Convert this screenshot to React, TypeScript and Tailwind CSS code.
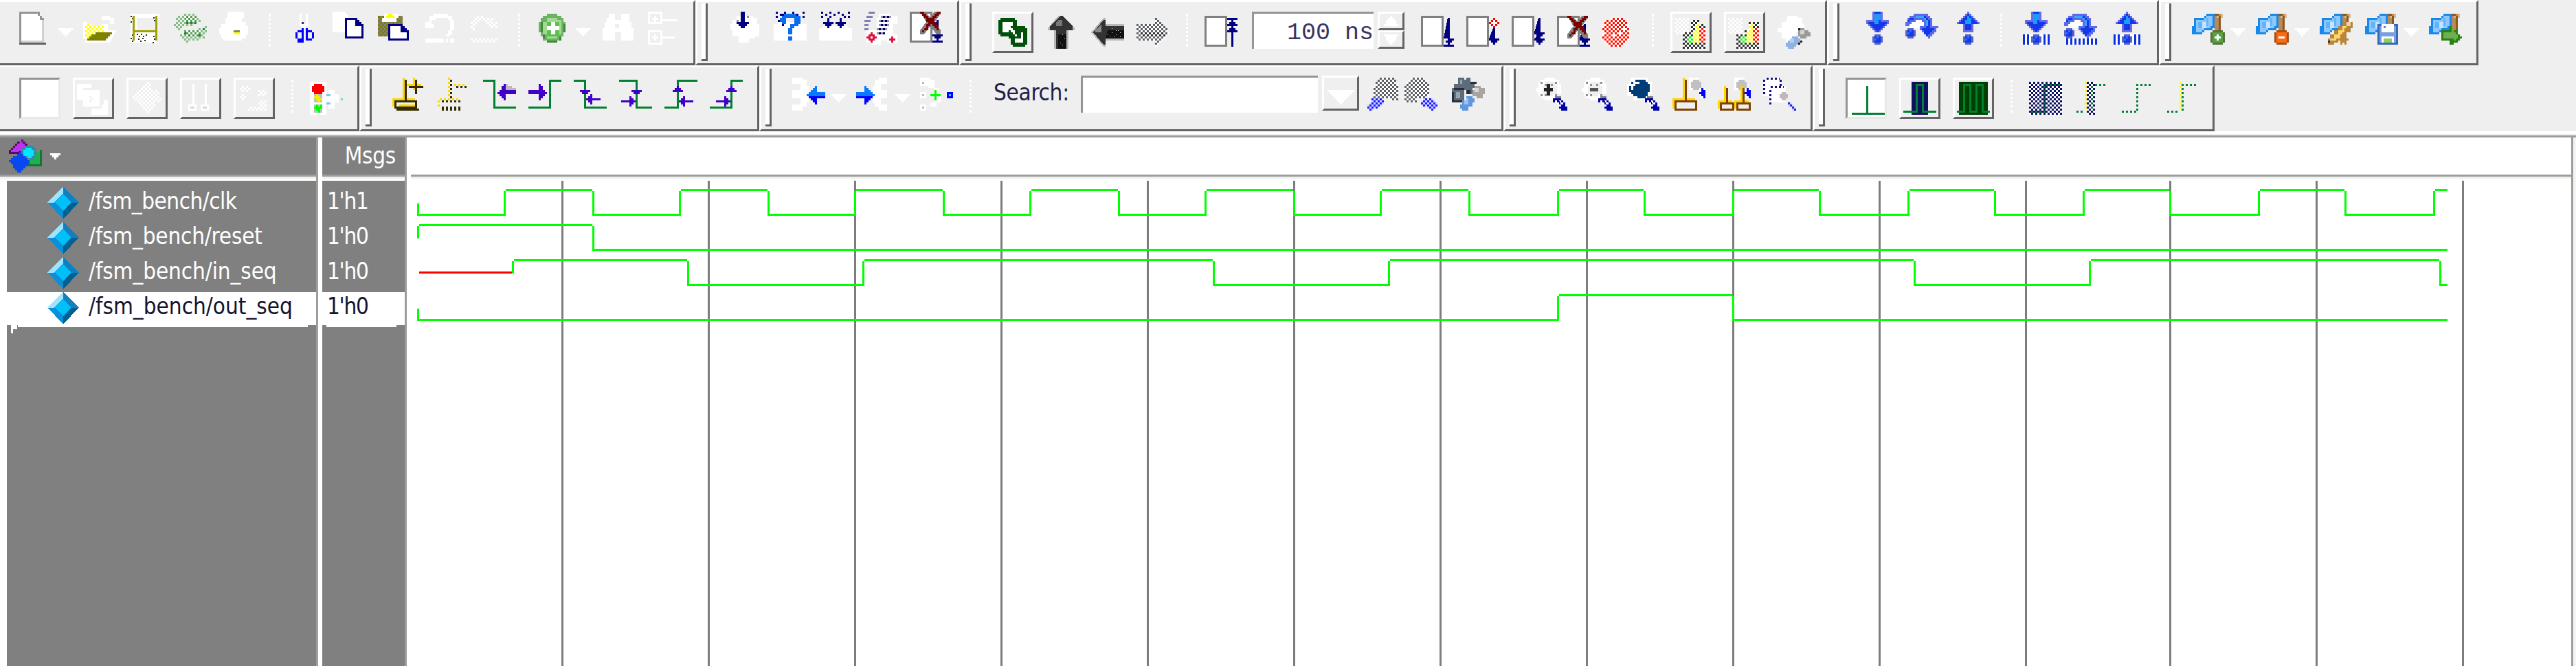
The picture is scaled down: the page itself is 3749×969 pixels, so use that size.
import React from "react";

type Kids = { children?: React.ReactNode };

const PATTERNS: [string, string, string][] = [
  ["yellow", "#ffff00", "#ffffff"],
  ["green", "#4d9a4d", "#ffffff"],
  ["lgreen", "#86bd86", "#e8efe8"],
  ["olive", "#808000", "#808080"],
  ["gray", "#5d6166", "#ffffff"],
  ["black", "#303030", "#ffffff"],
  ["blue", "#1c1cff", "#d8d8ff"],
  ["navy", "#101060", "#ffffff"],
  ["rede", "#ff1000", "#ffffff"],
  ["lime", "#00ff00", "#ffffff"],
  ["white", "#ffffff", "#efefef"],
];

function Patterns() {
  return (
    <svg className="absolute h-0 w-0" aria-hidden="true">
      <defs>
        {PATTERNS.map(([id, a, b]) => (
          <pattern key={id} id={id} width="2" height="2" patternUnits="userSpaceOnUse">
            <rect width="2" height="2" fill={b} />
            <rect width="1" height="1" fill={a} />
            <rect x="1" y="1" width="1" height="1" fill={a} />
          </pattern>
        ))}
      </defs>
    </svg>
  );
}

/* filled shape on the 16x16 grid */
function S({ f, d }: { f: string; d: string }) {
  return <path fill={f} d={d} />;
}
/* open line drawn one grid cell wide */
function L({ c, d, w = 1, dash }: { c: string; d: string; w?: number; dash?: string }) {
  return <path fill="none" stroke={c} strokeWidth={w} strokeDasharray={dash} d={d} />;
}

function Icon({ children, className = "" }: Kids & { className?: string }) {
  return (
    <svg viewBox="0 0 16 16" shapeRendering="crispEdges" className={`h-12 w-12 shrink-0 overflow-visible ${className}`}>
      {children}
    </svg>
  );
}

function Caret({ className = "" }: { className?: string }) {
  return (
    <svg viewBox="0 0 7 4" shapeRendering="crispEdges" className={`-mr-[3px] -ml-[9px] h-3 w-[21px] shrink-0 ${className}`}>
      <path fill="#fff" d="M0 0h7v1h-1v1h-1v1h-1v1h-1v-1h-1v-1h-1v-1h-1z" />
    </svg>
  );
}

function Sep() {
  return <div className="mx-[6px] mt-[3px] h-12 w-[3px] shrink-0 border-l-[3px] border-dotted border-white" />;
}

function Btn({ children, pressed = false }: Kids & { pressed?: boolean }) {
  return (
    <div
      className={
        pressed
          ? "h-[60px] w-[60px] shrink-0 border-[3px] border-t-[#959595] border-r-[#e8e8e8] border-b-[#e8e8e8] border-l-[#959595] bg-white p-[3px]"
          : "h-[60px] w-[60px] shrink-0 border-[3px] border-t-white border-r-[#656365] border-b-[#656365] border-l-white p-[3px]"
      }
    >
      {children}
    </div>
  );
}

function Bar({ children, className = "", grip = true }: Kids & { className?: string; grip?: boolean }) {
  return (
    <div
      className={`flex h-full shrink-0 border-t-[3px] border-r-[3px] border-b-[3px] border-t-white border-r-[#656365] border-b-[#656365] ${
        grip ? "border-l-[3px] border-l-white" : ""
      } ${className}`}
    >
      {grip && (
        <div className="mt-[2px] mr-[30px] ml-[6px] h-[84px] w-[9px] shrink-0 border-r-[3px] border-b-[3px] border-r-[#656365] border-b-[#656365] bg-white" />
      )}
      {children}
    </div>
  );
}

/* ---------- standard toolbar ---------- */
const NewDoc = () => (
  <Icon>
    <S f="#fff" d="M1 1h9l2 3v11H1z" />
    <S f="#959595" d="M0 0h10v1H1v14H0zM9 1h1v1h1v1h1v1h-2V2H9z" />
    <S f="#d0d0d0" d="M11 4h1v11H1v-1h10z" />
    <S f="#656365" d="M0 15h13v1H0z" />
  </Icon>
);
const OpenFolder = () => (
  <Icon>
    <S f="#fff" d="M0 5h2v8H0zM9 2h4v1h2v3h-2V4H9zM9 6h3v3h4l-3 6H1v-1h10l3-4H10z" />
    <S f="url(#yellow)" d="M1 6h3v1h6v3H6v1H5v1H4v1H1z" />
    <S f="#808000" d="M6 10h8v1h-1v1h-1v1h-1v1H2v-1h1v-1h1v-1h2z" />
  </Icon>
);
const Save = () => (
  <Icon>
    <S f="#fff" d="M1 1h14v2h-1v12H1z" />
    <S f="#efefef" d="M4 3h9v6H4z" />
    <g fill="#2a2a10">
      {[[1, 2], [1.5, 3], [1, 4.5], [1.5, 11], [1, 12.5], [1.5, 14], [12, 2.5], [12.3, 4], [4, 10.5], [5, 11.5], [6, 10.5], [7, 11.5], [4.5, 13], [5.5, 14], [6.5, 12.8], [7.5, 13.8], [8.2, 11], [12, 11.5], [12.3, 13], [11.6, 14.5]].map(
        ([x, y]) => (
          <rect key={`${x}-${y}`} x={x} y={y} width="0.67" height="0.67" />
        ),
      )}
    </g>
    <S f="#a0a000" d="M2 2h1v7h10V2h1v12h-1v-4H3v4H2z" />
  </Icon>
);
const Refresh = () => (
  <Icon>
    <S f="url(#lgreen)" d="M2 2h2V1h5V0h1v1h1v1h1v1h1v2h-2v1h-1v1H5v1H3v1H1V8H0V5h1V3h1zM15 7h1v4h-1v2h-2v1H7v2H6v-1H5v-1H4v-1H3v-2h2v-1h2V9h4V8h4z" />
    <S f="url(#green)" d="M5 2h6v3H6zM5 9h8v3H6z" />
    <S f="#2f7d3a" d="M6 5h1v1H6zM8 5h1v1H8zM10 5h1v1h-1zM5 10h1v1H5zM7 11h1v1H7zM12 11h1v1h-1zM14 8h1v1h-1z" />
  </Icon>
);
const Print = () => (
  <Icon>
    <S f="#fff" d="M4 0h8v3h-1v2h2v2h1v4h-1v2h-2v1H2v-1H1v-2H0V8h1V6h2V3h1z" />
    <S f="#8c8468" d="M7 9h3v1H7z" />
    <S f="#ffff00" d="M7 10h3v1H7z" />
  </Icon>
);
const Cut = () => (
  <Icon>
    <S f="#fff" d="M6 1h1v6H6zM9 1h1v6H9zM7 6h2v2H7z" />
    <S f="#333" d="M7 5h1v1H7z" />
    <S f="#0000ff" d="M7 8h1v7H7v-1H5v-1H4v-3h1V9h2zM9 8h1v1h2v1h1v3h-1v1H9zM5 14h2v1H5z" />
    <S f="#efefef" d="M5 10h2v3H5zM10 10h2v3h-2z" />
  </Icon>
);
const NavyDoc = ({ x, y, w, h }: { x: number; y: number; w: number; h: number }) => (
  <g transform={`translate(${x} ${y})`}>
    <path fill="#000080" d={`M0 0h${w - 3}v1h1v1h1v1h1v${h - 3}H0z`} />
    <path fill="#fff" d={`M1 1h${w - 5}v3h3v${h - 5}H1z`} />
  </g>
);
const Copy = () => (
  <Icon>
    <S f="#fff" d="M0 0h6l2 3v7H0z" />
    <NavyDoc x={6} y={3} w={9} h={10} />
  </Icon>
);
const Paste = () => (
  <Icon>
    <S f="url(#olive)" d="M0 2h12v10H0z" />
    <S f="#fff" d="M3 1h7v2h-1v2H2V3h1z" />
    <S f="#ffff00" d="M5 1h2v1h1v1H4V2h1z" />
    <NavyDoc x={5} y={6} w={10} h={8} />
  </Icon>
);
const Undo = () => (
  <Icon>
    <S f="#fff" d="M3 2h2V1h7v1h2v2h1v5h-1v2h-1v1h-2v-1h1V9h1V4h-1V3H6v1H4v2h1v2H1V5h2zM1 13h9v2H1zM11 13h1v2h-1zM13 13h2v2h-2z" />
  </Icon>
);
const Redo = () => (
  <Icon>
    <S f="url(#white)" d="M3 2h5v2H5v2H3v3H1V5h1zM8 3h4v2h2v3h-4V6H8zM1 13h13v2H1z" />
  </Icon>
);
const Plus = () => (
  <Icon>
    <S f="#6fb068" d="M5 1h5v1h2v1h1v2h1v5h-1v2h-1v2h-2v1H5v-1H3v-2H2v-2H1V5h1V3h1V2h2z" />
    <S f="#3f8a3a" d="M2 5h1v5H2zM13 6h1v4h-1zM5 14h5v1H5zM3 11h1v2H3zM11 12h1v2h-1z" />
    <S f="#9fdc90" d="M5 3h5v1h2v7h-2v2H5v-2H3V5h2z" />
    <S f="#5fbf50" d="M5 5h6v7H5z" />
    <S f="#fff" d="M7 5h2v2h2v2H9v2H7V9H5V7h2z" />
  </Icon>
);
const Binoc = () => (
  <Icon>
    <S f="#fff" d="M4 1h3v3h3V1h4v4h1v3h1v6h-6v-4H7v4H1V8h1V5h1V3h1z" />
    <S f="#efefef" d="M7 6h2v2H7z" />
  </Icon>
);
const Tree = () => (
  <Icon>
    <L c="#fff" d="M1.5 .5h6v5h-6zM1.5 9.5h6v6h-6zM8 4h7M8 12.5h6" />
    <S f="#fff" d="M4 2h1v3H4zM3 3h3v1H3zM4 11h1v3H4zM3 12h3v1H3z" />
  </Icon>
);

/* ---------- simulate toolbars ---------- */
const DownBlob = () => (
  <Icon>
    <S f="#fff" d="M4 2h8v1h2v3h1v6h-2v1h-3v2H5v-3H2V9H1V6h1V4h2z" />
    <S f="#909090" d="M4 4h1v1H4zM9 2h1v1H9z" />
    <S f="#000080" d="M6 0h2v5h2v1H9v1H8v1H6V7H5V6H4V5h2z" />
  </Icon>
);
const Dots = () => (
  <S
    f="#000080"
    d="M1 0h1v1H1zM5 0h1v1H5zM9 0h1v1H9zM14 0h1v1h-1zM3 1h1v1H3zM7 1h1v1H7zM11 1h1v1h-1zM1 2h1v1H1zM14 2h1v1h-1zM12 2h1v1h-1zM5 2h1v1H5z"
  />
);
const Question = () => (
  <Icon>
    <S f="#fff" d="M0 6h2V5h12v1h2v8H0z" />
    <Dots />
    <S f="#000080" d="M2 4h2v1H2zM12 4h1v1h-1zM4 6h1v1H4zM11 5h1v1h-1zM3 1h2v1H3z" />
    <S f="#0a6cf0" d="M5 1h6v1h2v4h-1v1h-2v1H9v3H7V8h1V6h2V3H6v3H4V5H3V3h1V2h1zM7 12h2v2H7z" />
  </Icon>
);
const DownPair = () => (
  <Icon>
    <S f="#fff" d="M0 8h16v6H0zM2 7h12v1H2z" />
    <Dots />
    <S f="#000080" d="M4 3h1v2h2v1H6v1H5v1H4V7H3V6H2V5h2zM10 3h1v2h2v1h-1v1h-1v1h-1V7H9V6H8V5h2z" />
  </Icon>
);
const ListStep = () => (
  <Icon>
    <S f="#fff" d="M7 1h6v1h3v4h-2v5h2v4h-5v-1H8v2H4v-1H1V9h5V3h1z" />
    <S f="#8080b0" d="M2 0h3v1H2zM1 2h3v1H1zM0 4h3v1H0zM0 6h2v1H0zM0 8h2v1H0z" />
    <S f="#9090b8" d="M8 2h5v1H8zM7 4h5v1H7zM7 6h5v1H7zM6 8h5v1H6zM6 10h4v1H6z" />
    <S f="#000060" d="M9 2h1v1H9zM11 2h1v1h-1zM8 4h1v1H8zM10 4h1v1h-1zM8 6h1v1H8zM10 6h1v1h-1zM7 8h1v1H7zM9 8h1v1H9zM7 10h1v1H7zM9 10h1v1H9z" />
    <S f="#dc143c" d="M3 10h1v1h1v1h1v1H5v1H4v1H3v-1H2v-1H1v-1h1v-1h1zM13 12h1v1h1v1h-1v1h-1v-1h-1v-1h1z" />
    <S f="#fff" d="M3 12h1v1H3z" />
  </Icon>
);
const Cross = ({ x }: { x: number }) => (
  <g transform={`translate(${x} 0)`}>
    <S f="#808080" d="M0 0h2l3 3 2-3h3v1L7 5l3 4v2H8L5 7l-3 4H0V9l3-4z" />
    <S f="#7d0000" d="M0 0h2v1h1v1h1v1h2V2h1V1h1V0h2v1H9v1H8v1H7v2h1v2h1v2H8V8H7V7H6V6H5v1H4v2H2v1H1V9h1V8h1V6h1V5H3V3H2V2H1V1H0z" />
  </g>
);
const XDoc = () => (
  <Icon>
    <S f="#808080" d="M0 0h11v15H0z" />
    <S f="#fff" d="M1 1h9v13H1z" />
    <S f="#000080" d="M13 4h1v7h2v1h-1v1h-1v1h2v1h-5v-1h2v-1h-1v-1h-1v-1h2z" />
    <Cross x={5} />
  </Icon>
);
const Rings = () => (
  <Icon>
    <S f="#00500c" d="M2 1h7v1h1v3h4v1h1v8h-1v1H8v-1H7v-3H6v-1H2V9H1V2h1z" />
    <S f="#fff" d="M3 3h5v2H5v3H3zM12 8h1v5H9v-2h3zM5 5h2v1h1v1h1v2h1v1H9V9H8V8H7V7H6v1H5z" />
  </Icon>
);
const BlackUp = () => (
  <Icon>
    <S f="#b8b8b8" d="M6 0h2l6 6v1h-3v9H4V7H1V6z" />
    <S f="#333" d="M7 0h1l5 5v2h-3v9H5V7H2V5z" />
    <S f="#777" d="M6 2h2v3H5V3z" />
    <S f="#111" d="M6 9h4v7H6z" />
    <S f="#ccc" d="M8 9h.4v.4H8zM9 11h.4v.4H9zM7 13h.4v.4H7zM8 14h.4v.4H8z" />
  </Icon>
);
const BlackLeft = () => (
  <Icon>
    <S f="#b8b8b8" d="M0 8l6-7h1v3h9v8H7v3H6z" />
    <S f="#333" d="M1 8l5-6h1v3h9v6H7v3H6z" />
    <S f="#888" d="M2 7l3-3v4H2z" />
    <S f="#111" d="M8 7h8v4H7z" />
    <S f="#ddd" d="M8 9h.4v.4H8zM10 8h.4v.4h-.4zM12 9h.4v.4h-.4zM11 10h.4v.4h-.4zM14 8h.4v.4h-.4zM13 7h.4v.4h-.4zM9 10h.4v.4H9zM12 7h.4v.4h-.4zM14 10h.4v.4h-.4zM10 6h.4v.4h-.4z" />
  </Icon>
);
const DotRight = () => (
  <Icon>
    <S f="url(#gray)" d="M0 4h9V1h1v1h1v1h1v1h1v1h1v1h1v2h1v1h-1v1h-1v1h-1v1h-1v1h-1v1h-1v1H9v-3H0z" />
    <S f="url(#black)" d="M2 8h12v2H2z" />
  </Icon>
);
const StepDoc = ({ children }: Kids) => (
  <Icon>
    <S f="#808080" d="M0 0h11v15H0z" />
    <S f="#fff" d="M1 1h9v13H1z" />
    {children}
  </Icon>
);
const head = "h2v1h-1v1h-1v1h-1v-1h-1v-1h-1v-1z";
const Restart = () => (
  <StepDoc>
    <S f="#000080" d="M11 1h5v1h-2v1h1v1h1v1h-2v1h1v1h1v1h-2v7h-1V8h-2V7h1V6h1V5h-2V4h1V3h1V2h-2z" />
  </StepDoc>
);
const RunDown = () => (
  <StepDoc>
    <S f="#000080" d={`M13 1h1v10${head}M13 1h-0v10h-2v1h2zM11 14h5v1h-5z`} />
  </StepDoc>
);
const RunDiamond = () => (
  <StepDoc>
    <S f="#000080" d={`M13 6h1v5${head}`} />
    <S f="#ff0000" d="M13 1h1v1h1v1h1v1h-1v1h-1v1h-1V5h-1V4h-1V3h1V2h1z" />
    <S f="#fff" d="M13 2h1v1h1v1h-1v1h-1V4h-1V3h1z" />
  </StepDoc>
);
const RunAll = () => (
  <StepDoc>
    <S f="#000080" d={`M13 1h1v7${head}M13 9h1v2${head}`} />
  </StepDoc>
);
const Break = () => (
  <StepDoc>
    <S f="#000080" d={`M13 4h1v7${head}M11 14h5v1h-5z`} />
    <Cross x={5} />
  </StepDoc>
);
const Stop = () => (
  <Icon>
    <S f="url(#rede)" d="M4 1h6v1h1v1h1v2h1v7h-1v1h-1v1h-1v1H3v-1H2v-1H1v-2H0V9h1V8H0V5h1V3h1V2h2z" />
    <S f="#fff" d="M9 6h2v1H9zM4 9h2v1H4zM8 8h2v1H8z" />
  </Icon>
);
const Profile = ({ cut = false }: { cut?: boolean }) => (
  <Icon className="mt-[3px]">
    <S f="url(#white)" d="M0 0h7v8H0z" />
    <S f="url(#black)" d={cut ? "M4 8h4V6h2V2h5v13H4z" : "M4 7h4V1h4v2h3v12H4z"} />
    <S f="url(#lime)" d="M6 9h3v3H6z" />
    <S f="url(#yellow)" d="M10 3h2v9H9V7h1z" />
    <S f="url(#rede)" d="M12 5h3v7h-3z" />
  </Icon>
);
const Wrench = () => (
  <Icon>
    <S f="#fff" d="M5 0h5v1h2v3h1v2h-2v2H9v3H6v3H4v-3H2V8H0V6h2V3h2z" />
    <S f="#9a9a96" d="M10 6h3v1h2v1h1v2h-2v1h-3v-1h-1z" />
    <S f="#d4d4d0" d="M11 7h2v2h-2z" />
    <S f="#222" d="M10 6h1v1h-1zM11 12h1v1h-1zM11 14h-1v-1h1z" />
    <S f="#8fb2e2" d="M7 10h3v1h1v2h-1v1H9v1H8v1H5v-1H4v-2h1v-1h1v-1h1z" />
    <S f="#b8d0f0" d="M6 11h2v2H6z" />
  </Icon>
);

/* ---------- step toolbar ---------- */
const ArrowDown = () => (
  <>
    <S f="#6a6ae8" d="M6 0h5v4h3v2h-1v1h-1v1h-1v1h-1v1H7V9H6V8H5V7H4V6H3V4h3z" />
    <S f="#1238e8" d="M7 0h3v5h3v1h-1v1h-1v1h-1v1H9v1H8V9H7V8H6V7H5V6H4V5h3z" />
    <S f="#1a9cff" d="M7 1h3v3H9v2H7z" />
  </>
);
const ArrowUp = () => (
  <>
    <S f="#6a6ae8" d="M8 0h1v1h1v1h1v1h1v1h1v1h1v1h-3v4H6V6H3V5h1V4h1V3h1V2h1V1h1z" />
    <S f="#1238e8" d="M8 1h1v1h1v1h1v1h1v1h1v1h-3v3H7V6H4V5h1V4h1V3h1V2h1z" />
    <S f="#1a9cff" d="M8 2h1v1h1v3H7V4h1z" />
  </>
);
const Ball = ({ x, y }: { x: number; y: number }) => (
  <g transform={`translate(${x} ${y})`}>
    <S f="#5a62c0" d="M1 0h3v1h1v3h-1v1H1V4H0V1h1z" />
    <S f="#1238e8" d="M1 1h3v3H1z" />
    <S f="#2a70ff" d="M2 1h1v1H2zM1 2h1v1H1z" />
  </g>
);
const StepInto = () => (
  <Icon>
    <ArrowDown />
    <Ball x={6} y={11} />
  </Icon>
);
const Curve = () => (
  <>
    <S f="#fff" d="M2 6h1V5h1V4h4v1h1v2H7v1H2z" />
    <S f="#5a6ae8" d="M4 1h7v1h1v1h1v4h3v1h-1v2h-1v1h-1v1h-1v1h-1v-1h-1v-1H9v-1H8V9H7V7h2V5H8V4H5v1H3v1H2v1H0V5h1V3h1V2h2z" />
    <S f="#1238e8" d="M5 2h5v1h1v1h1v4h2v1h-1v1h-1v1h-1v1h-1v-1H9V9H8V8h2V4H9V3H4v1H2v1H1V4h1V3h3z" />
    <S f="#35a8ff" d="M5 2h4v1h1v1h1v3h-1V4H9V3H5z" />
  </>
);
const StepOver = () => (
  <Icon>
    <Curve />
    <Ball x={0} y={8} />
  </Icon>
);
const StepOut = () => (
  <Icon>
    <ArrowUp />
    <Ball x={6} y={11} />
  </Icon>
);
const Stripes = () => (
  <>
    <S f="#fff" d="M2 11h13v5H2z" />
    <S f="#0a30e0" d="M2 11h1v5H2zM4 11h1v5H4zM12 11h1v5h-1zM14 11h1v5h-1z" />
  </>
);
const IntoCur = () => (
  <Icon>
    <Stripes />
    <ArrowDown />
    <Ball x={6} y={11} />
  </Icon>
);
const OverCur = () => (
  <Icon>
    <S f="#fff" d="M1 13h15v3H1z" />
    <S f="#0a30e0" d="M1 13h1v3H1zM3 13h1v3H3zM5 13h1v3H5zM7 13h1v3H7zM9 13h1v3H9zM11 13h1v3h-1zM13 13h1v3h-1zM15 13h1v3h-1z" />
    <Curve />
    <Ball x={0} y={8} />
  </Icon>
);
const OutCur = () => (
  <Icon>
    <Stripes />
    <ArrowUp />
    <Ball x={6} y={11} />
  </Icon>
);

/* ---------- bookmark toolbar ---------- */
const Flag = ({ children }: Kids) => (
  <Icon>
    <S f="#b88a5a" d="M11 1h3v3h-1v7h-2z" />
    <S f="#8a5a1a" d="M13 2h1v8h-1zM11 1h2v1h-2z" />
    <S f="#d8b890" d="M12 2h1v1h-1zM14 1h1v2h-1z" />
    <S f="#1a88e8" d="M7 1h4v7h-1v1H6v1H5v1H0V7h1V3h5V2h1z" />
    <S f="#8cc8ff" d="M7 2h3v5H9v1H6v1H5v1H2V4h4V3h1z" />
    <S f="#60b4f8" d="M3 5h2v3H3zM7 3h1v4H7z" />
    <S f="#c4e4ff" d="M5 5h2v3H5z" />
    {children}
  </Icon>
);
const FlagAdd = () => (
  <Flag>
    <S f="#5a7040" d="M10 9h5v1h1v5h-1v1h-5v-1H9v-5h1z" />
    <S f="#58a040" d="M10 10h5v5h-5z" />
    <S f="#fff" d="M12 11h1v1h1v1h-1v1h-1v-1h-1v-1h1z" />
  </Flag>
);
const FlagDel = () => (
  <Flag>
    <S f="#a0501a" d="M10 9h5v1h1v5h-1v1h-5v-1H9v-5h1z" />
    <S f="#ff6a10" d="M10 10h5v5h-5z" />
    <S f="#fff" d="M11 12h3v1h-3z" />
  </Flag>
);
const FlagEdit = () => (
  <Flag>
    <S f="#b8853c" d="M13 5h3v3h-1v2h-2v3h1v1h-1v2h-1v-1h-1v1h-1v-2H9v1H7v1H4v-3h1v-2h2V9h2V7h2V5z" />
    <S f="#ffd860" d="M11 7h2v1h-1v2h-1v1h-1v2H8v1H7v-3h2V9h2z" />
    <S f="#f0d0b0" d="M13 5h2v2h-2zM5 13h2v1H5z" />
    <S f="#403010" d="M4 14h1v1H4z" />
  </Flag>
);
const FlagSave = () => (
  <Flag>
    <S f="#3868b8" d="M6 6h10v10H6z" />
    <S f="#7a9ee0" d="M7 7h8v8H7z" />
    <S f="#fff" d="M8 6h6v4H8zM8 12h6v3H8z" />
    <S f="#6080c0" d="M9 7h1v1H9z" />
    <S f="#90cc60" d="M9 13h4v2H9z" />
  </Flag>
);
const FlagGo = () => (
  <Flag>
    <S f="#2a8010" d="M10 7h1v1h1v1h2v2h1v1h1v1h-1v1h-1v1h-2v1h-2v-2H6V9h4z" />
    <S f="#6cb050" d="M7 10h4V8h1v2h1v1h1v2h-1v1h-1v-1H7z" />
  </Flag>
);

/* ---------- second row ---------- */
const WinRings = () => (
  <Icon>
    <S f="#fff" d="M0 1h7v2H3v6H0zM3 4h8v8H3zM13 9h2v7H7v-3h5v-2h1z" />
    <S f="url(#white)" d="M6 7h2v3H6z" />
  </Icon>
);
const WinCross = () => (
  <Icon>
    <S f="url(#white)" d="M7 0h2v1h1v2h1v1h2v1h1v2h1v2h-1v1h-2v2h-1v2H9v1H7v-1H6v-2H4v-2H2V8H0V7h2V5h2V3h2V1h1z" />
  </Icon>
);
const WinBars = () => (
  <Icon>
    <S f="#fff" d="M4 1h1v10H4zM10 1h1v10h-1zM2 11h4v3H2zM8 11h4v3H8z" />
    <S f="#d8d8d8" d="M3 12h2v1H3zM9 12h2v1H9z" />
  </Icon>
);
const WinDots = () => (
  <Icon>
    <S f="url(#white)" d="M1 2h5v3H1zM10 4h4v3h-4zM1 6h3v3H1zM10 9h4v3h-4zM5 12h9v2H5z" />
  </Icon>
);
const Traffic = () => (
  <Icon>
    <S f="#fff" d="M0 0h8v16H0zM9 4h3v2h2v4h-2v3H9v-3H8V6h1z" />
    <S f="#ff0000" d="M2 1h4v1h1v3H6v1H2V5H1V2h1z" />
    <S f="#c0c0c0" d="M2 6h4v4H2z" />
    <S f="#f8f000" d="M3 6h1v1h1v1h1v1H5v1H4V9H3V8H2V7h1z" />
    <S f="#c0c0c0" d="M2 11h4v4H2z" />
    <S f="#00ff00" d="M3 11h1v1h1v-1h1v2H5v2H4v-1H3v-1H2v-1h1z" />
    <S f="#80c8e8" d="M8 6h2v1H8zM8 10h2v1H8zM15 8h1v1h-1z" />
  </Icon>
);
const AddCursor = () => (
  <Icon>
    <L c="#ffd700" d="M5.5 0v10M10.5 0v6M7 3.5h7M0.5 14V10.5H11" />
    <L c="#332a00" d="M6.5 1v10M11.5 1v7M8 4.5h7M1.5 11.5h10v3h-10zM2 15.5h11" />
    <L c="#ffd700" d="M3 13.5h8" />
  </Icon>
);
const DelCursor = () => (
  <Icon>
    <L c="#ffd700" d="M5.5 0v10M8 3.5h5M1 10.5h10M.5 11v3" dash="1" />
    <L c="#332a00" d="M6.5 1v10M9 4.5h6M2 11.5h9M2 14.5h9M2 15.5h10" dash="1" />
  </Icon>
);
const G = "#008030";
const V = "#4000c8";
const EdgePrev = () => (
  <Icon className="mt-[3px]">
    <L c={G} d="M0 .5h5.5v13H16" />
    <S f="#c0b8c0" d="M10 2h2v1h2v1h2v1h-5z" />
    <S f={V} d="M7 6h1V5h1V3h1V2h1v3h5v2h-5v3h-1V9H9V8H8V7H7z" />
  </Icon>
);
const EdgeNext = () => (
  <Icon className="mt-[3px]">
    <L c={G} d="M16 .5h-5.500v13H0" />
    <S f={V} d="M9 6H8V5H7V3H6V2H5v3H0v2h5v3h1V9h1V8h1V7h1z" />
  </Icon>
);
const LeftSmall = "M0 2h1V1h1V0h1v2h4v1H3v2H2V4H1V3H0z";
const RightSmall = "M7 2H6V1H5V0H4v2H0v1h4v2h1V4h1V3h1z";
const FallPrev = () => (
  <Icon className="mt-[3px]">
    <L c={G} d="M0 .5h5.5v13H16" />
    <S f={V} d="M3 5h5v1H7v1H4V6H3z" />
    <g transform="translate(6 7)"><S f={V} d={LeftSmall} /></g>
  </Icon>
);
const FallNext = () => (
  <Icon className="mt-[3px]">
    <L c={G} d="M0 .5h8.5v13H16" />
    <S f={V} d="M6 5h5v1h-1v1H7V6H6z" />
    <g transform="translate(1 8)"><S f={V} d={RightSmall} /></g>
  </Icon>
);
const RisePrev = () => (
  <Icon className="mt-[3px]">
    <L c={G} d="M16 .5H6.5v13H0" />
    <S f={V} d="M6 3h1v1h1v1h1v1H4V5h1V4h1z" />
    <g transform="translate(7 8)"><S f={V} d={LeftSmall} /></g>
  </Icon>
);
const RiseNext = () => (
  <Icon className="mt-[3px]">
    <L c={G} d="M16 .5h-5.500v13H0" />
    <S f={V} d="M10 3h1v1h1v1h1v1H8V5h1V4h1z" />
    <g transform="translate(3 8)"><S f={V} d={RightSmall} /></g>
  </Icon>
);
const Back = () => (
  <Icon>
    <S f="#fff" d="M0 0h5v1h2v3h1v8H7v2H5v2H0v-3h4v-3H0V6h4V3H0z" />
    <S f="#0a78ff" d="M7 8h1V7h1V6h1V5h1V4h1v3h4v2H7z" />
    <S f="#0000ff" d="M8 9h8v1h-4v3h-1v-1h-1v-1H9v-1H8z" />
  </Icon>
);
const Forward = () => (
  <Icon>
    <S f="#fff" d="M15 0h-4v1H9v3H8v8h1v2h2v2h4v-3h-3v-3h3V6h-3V3h3z" />
    <S f="#0a78ff" d="M9 8H8V7H7V6H6V5H5V4H4v3H0v2h9z" />
    <S f="#0000ff" d="M8 9H0v1h4v3h1v-1h1v-1h1v-1h1z" />
  </Icon>
);
const AddMark = () => (
  <Icon>
    <S f="#fff" d="M0 0h5v1h2v4h2v3h1v4H8v2H5v-2h2V5H4V4H0zM0 7h3v3H0zM0 13h3v3H0z" />
    <S f="#c0b8c0" d="M1 2h1v1H1zM1 8h1v1H1zM1 14h1v1H1z" />
    <S f="#00ff00" d="M7 6h1v2h2v1H8v2H7V9H5V8h2z" />
    <S f="#0000ff" d="M13 7h3v3h-3z" />
    <S f="#00e0ff" d="M14 8h1v1h-1z" />
  </Icon>
);
const FindPrev = () => (
  <Icon>
    <S f="url(#gray)" d="M6 0h7v1h1v2h1v8h-4v-1H3V4h1V2h1V1h1z" />
    <S f="url(#blue)" d="M2 10h5v1h1v2H7v1H5v1H3v1H1v-1H0v-2h1v-1h1z" />
  </Icon>
);
const FindNext = () => (
  <Icon>
    <S f="url(#gray)" d="M3 0h7v1h1v2h1v6h-2v1H6v2H0V4h1V2h1V1h1z" />
    <S f="url(#blue)" d="M9 10h5v1h1v1h1v2h-1v1h-1v1h-1v-1h-2v-1H9v-1H8v-2h1z" />
  </Icon>
);
const FindOpts = () => (
  <Icon>
    <S f="#5d6c7a" d="M3 0h3v1h1V0h2v2h2v3h-1v3H7V6H6v6H0V5h1V3h2z" />
    <S f="#2a2f36" d="M0 7h1v4h4v1H0zM1 5h5v1H1zM9 2h3v1H9zM7 6h2v2H7z" />
    <S f="#96a4b0" d="M4 1h1v2H4zM2 7h2v3H2z" />
    <S f="#a8a4a0" d="M11 4h3v1h2v3h-1v2h-3V9h-2V6h1z" />
    <S f="#dad6d2" d="M11 5h2v2h-2z" />
    <S f="#5f96dc" d="M7 9h3v1h1v2h-1v2H8v2H5v-1H4v-2h1v-2h2z" />
    <S f="#98c0f4" d="M7 10h1v3H6v-2h1z" />
  </Icon>
);
const Handle = () => (
  <>
    <S f="#808080" d="M9 9h3v1H9z" />
    <S f="#0000a8" d="M8 10h4v1h1v1h1v2h1v2h-3v-1h-1v-2h-1v-1H8z" />
    <S f="#fff" d="M9 11h1v1h1v1h1v1h-1v-1h-1v-1H9zM11 11h1v1h1v1h-1z" />
  </>
);
const Lens = ({ minus = false }: { minus?: boolean }) => (
  <Icon>
    <S f="#fff" d="M4 0h5v1h2v2h1v5h-2v2H9v1H4v-1H2V9H1V7H0V5h1V2h1V1h2z" />
    <S f="#efefef" d="M4 2h5v2h1v4H8v1H4V8H3V4h1z" />
    <S f="#909090" d="M2 2h1v1H2zM9 2h1v1H9zM2 8h1v1H2zM9 8h1v1H9zM4 3h1v1H4zM7 3h1v1H7zM4 8h1v1H4z" />
    {minus ? <S f="#555" d="M4 5h4v1.500H4z" /> : <S f="#222" d="M5 3h1.500v2H8v1.500H6.500v2H5v-2H3.500V5H5z" />}
    <Handle />
  </Icon>
);
const LensFull = () => (
  <Icon>
    <S f="#fff" d="M2 0h8v2h2v6h-1v2h-1v1H3V9H0V3h1z" />
    <S f="#003c78" d="M4 1h5v1h1v1h1v4h-1v2H9v1H5V9H3V8H2V7H1V4h1V2h2z" />
    <S f="#fff" d="M3 2h3v1H4v1H3v2H2V3h1z" />
    <g transform="translate(.5 0)"><Handle /></g>
  </Icon>
);
const CursorZoom = () => (
  <Icon>
    <S f="#fff" d="M8 0h5v6H8zM12 5h4v5h-2z" />
    <S f="#c0c0c0" d="M10 1h3v1h1v3h-1v1h-3V5H9V2h1z" />
    <S f="#0000ff" d="M13 7h1V5h1v1h1v4h-1V9h-1V8h-1z" />
    <L c="#ffd700" d="M5.5 0v10.5M11 10.5H.5V15" />
    <L c="#804000" d="M6.5 1v10M1.5 11.5h10v4h-10z" />
  </Icon>
);
const CursorPair = () => (
  <Icon>
    <S f="#fff" d="M8 0h5v6H8zM12 5h4v5h-2z" />
    <S f="#c0c0c0" d="M10 1h3v1h1v3h-1v1h-3V5H9V2h1z" />
    <S f="#0000ff" d="M14 7V5h1v1h1v4h-1V9h-1V8h-1V7z" />
    <L c="#ffd700" d="M3.5 4v7M.5 15v-3.5H7M11.5 4v7M8.5 15v-3.500H15" />
    <L c="#804000" d="M4.5 5v7M1.5 12.5h6v3h-6zM12.5 5v7M9.5 12.5h6v3h-6z" />
  </Icon>
);
const ZoomBox = () => (
  <Icon>
    <S f="#fff" d="M1 0h7v4h3v8H3V9H0V1h1z" />
    <L c="#101080" d="M1.5 .5H8M.5 1v8M3.5 4.5H10M3.5 6v8M8.5 1v3" dash="1" />
    <S f="#c0b8c0" d="M9 7h2v1h1v2h-1v1H9v-1H8V8h1z" />
    <S f="url(#blue)" d="M12 12h2v1h1v1h1v2h-2v-2h-2z" />
  </Icon>
);
const LineMode = () => (
  <Icon>
    <L c={G} d="M8.5 2v13.500M1 15.5h16" />
  </Icon>
);
const PulseMode = () => (
  <Icon>
    <S f="#101060" d="M4 0h8v16H4z" />
    <L c={G} d="M0 14.5h6.500V1.500h3v13H16" />
  </Icon>
);
const DenseMode = () => (
  <Icon>
    <S f="#004000" d="M1 0h14v16H1z" />
    <L c={G} d="M0 14.5h3.500V1.500h3v13h3V1.500h3v13H16" />
  </Icon>
);
const Pat1 = () => (
  <Icon>
    <S f="url(#navy)" d="M0 0h16v16H0z" />
    <L c={G} d="M1 14.5h6.500V1.500H15" dash="1" />
  </Icon>
);
const Pat2 = () => (
  <Icon>
    <S f="url(#navy)" d="M6 0h4v16H6z" />
    <L c="#ffff00" d="M5.5 0v14" dash="1" />
    <L c={G} d="M1 14.5h4M8.5 2v12M10 1.5h5" dash="1" />
  </Icon>
);
const Pat3 = () => (
  <Icon>
    <L c={G} d="M1 14.5h7.500V1.500H16" dash="1" />
  </Icon>
);
const Pat4 = () => (
  <Icon>
    <L c="#ffff00" d="M7.5 0v14" dash="1" />
    <L c={G} d="M1 14.5h6M8.5 14V1.500H15" dash="1" />
  </Icon>
);

/* ---------- signal list ---------- */
const SIGNALS = [
  { name: "/fsm_bench/clk", value: "1'h1", track: "tracking-[-0.5px]" },
  { name: "/fsm_bench/reset", value: "1'h0", track: "tracking-[-0.2px]" },
  { name: "/fsm_bench/in_seq", value: "1'h0", track: "tracking-[-0.1px]" },
  { name: "/fsm_bench/out_seq", value: "1'h0", track: "tracking-[0px]", selected: true },
];

function Diamond() {
  return (
    <svg viewBox="0 0 16 16" shapeRendering="crispEdges" className="ml-[59px] h-[48px] w-[46px] shrink-0" preserveAspectRatio="none">
      <S f="#0a90d8" d="M8 0L16 7.500L8 15.500L0 7.500z" />
      <S f="#9ce4ff" d="M8 0v3L3.500 7.500H0z" />
      <S f="#1080c0" d="M8 0v3l4 4.500h4z" />
      <S f="#006090" d="M16 7.500L8 15.500v-3.500l4-4.500z" />
      <S f="#00c0fa" d="M8 3.500L12 7.500L8 11.500L4 7.500z" />
    </svg>
  );
}

function HeaderIcon() {
  return (
    <svg viewBox="0 0 16 16" shapeRendering="crispEdges" preserveAspectRatio="none" className="ml-[13px] h-[48px] w-[48px] shrink-0">
      <S f="#107830" d="M15 5h1v8H9v-1h6z" />
      <S f="#20b050" d="M12 6h3v6H9z" />
      <S f="#501060" d="M6 0h1v1h1v1h1v2h1v2L6 7H0V5h1V4h1V3h1V2h1V1h2z" />
      <S f="#c030f0" d="M5.500 1h1v1h1v1h1v2L4 6H1V5h1V4h1V3h1V2h1z" />
      <S f="#3888a8" d="M8 3h4v1h1v5h-1v1h-2V9H8V8H6V4h2z" />
      <S f="#00e8ff" d="M8 4h3v1h1v3h-1v1H9V8H7V5h1z" />
      <S f="#0848f0" d="M5 6h1v1h1v1h1v1h1v1h1v2H9v1H8v1H7v1H6v1H4v-1H3v-1H2v-2H1v-1H0v-1h1V9h1V8h2V7h1z" />
    </svg>
  );
}

const LOW = 36;

/* Two-level trace in the wave pane's own coordinates. */
function Trace({ top, edges, startHigh, from, end }: { top: number; edges: number[]; startHigh: boolean; from: number; end: number }) {
  let high = startHigh;
  let x = from;
  const out: React.ReactNode[] = [];
  edges.forEach((e, i) => {
    out.push(<rect key={`h${i}`} x={x} y={top + (high ? 0 : LOW)} width={e - x + (high ? 0 : 3)} height="3" />);
    out.push(<rect key={`v${i}`} x={e} y={top + 3} width="3" height={LOW} />);
    high = !high;
    x = e + (high ? 3 : 0);
  });
  out.push(<rect key="last" x={x} y={top + (high ? 0 : LOW)} width={end - x} height="3" />);
  return <g fill="#00ff00">{out}</g>;
}

function Waves() {
  const end = 2964;
  const clk: number[] = [];
  for (let k = 0; k < 12; k++) {
    clk.push(135 + Math.round((k * 255.27) / 3) * 3);
    if (k < 11) clk.push(264 + Math.round((k * 255) / 3) * 3);
  }
  return (
    <svg className="block h-[706px] w-[3144px] bg-white" viewBox="0 0 3144 706" shapeRendering="crispEdges">
      {Array.from({ length: 14 }, (_, i) => (
        <rect key={i} x={219 + Math.round((i * 212.85) / 3) * 3} y="0" width="3" height="706" fill="#7d7d7d" />
      ))}
      <Trace top={12} edges={clk} startHigh={false} from={9} end={end} />
      <Trace top={63} edges={[264]} startHigh from={12} end={end} />
      <rect x="12" y="132" width="135" height="3" fill="#ff0000" />
      <Trace top={114} edges={[402, 657, 1167, 1422, 2187, 2442, 2952]} startHigh from={150} end={end} />
      <Trace top={165} edges={[1668, 1923]} startHigh={false} from={9} end={end} />
      <g fill="#00ff00">
        <rect x="147" y="117" width="3" height="18" />
        <rect x="9" y="33" width="3" height="18" />
        <rect x="9" y="66" width="3" height="18" />
        <rect x="9" y="186" width="3" height="18" />
      </g>
    </svg>
  );
}

const ui = "font-['DejaVu_Sans_Condensed','DejaVu_Sans','Noto_Sans',sans-serif] [font-stretch:condensed]";

export default function App() {
  return (
    <div className={`flex h-[969px] w-[3749px] flex-col overflow-hidden bg-white text-[33px] whitespace-pre ${ui}`}>
      <Patterns />
      <div className="flex h-[191px] shrink-0 flex-col bg-[#efefef]">
        <div className="flex h-[95px]">
          <Bar grip={false} className="w-[1012px]">
            <div className="flex items-start gap-[18px] pt-[14px] pl-[28px]">
              <NewDoc /><Caret className="mt-6" /><OpenFolder /><Save /><Refresh /><Print /><Sep />
              <Cut /><Copy /><Paste /><Undo /><Redo /><Sep />
              <Plus /><Caret className="mt-6" /><Binoc /><Tree />
            </div>
          </Bar>
          <Bar className="w-[384px]">
            <div className="flex items-start gap-[18px] pt-[14px]">
              <DownBlob /><Question /><DownPair /><ListStep /><XDoc />
            </div>
          </Bar>
          <Bar className="w-[1263px]">
            <div className="flex items-start gap-[18px] pt-[14px]">
              <Btn><Rings /></Btn>
              <div className="mt-[6px] flex gap-[18px]"><BlackUp /><BlackLeft /><DotRight /></div>
              <Sep />
              <div className="mt-[6px]"><Restart /></div>
              <div className="ml-[3px] h-[54px] w-[177px] border-t-[3px] border-l-[3px] border-[#959595] bg-white pt-[4px] pl-[48px] font-['Liberation_Mono',monospace] text-[35px] leading-[48px] text-[#3a3560]">
                100 ns
              </div>
              <div className="-ml-[12px] flex h-[54px] w-[39px] flex-col">
                {[0, 1].map((i) => (
                  <div key={i} className="flex h-[27px] items-center justify-center border-[3px] border-t-white border-r-[#656365] border-b-[#656365] border-l-white">
                    <svg viewBox="0 0 7 5" className="h-[15px] w-[21px]" shapeRendering="crispEdges">
                      <path fill="#fff" d={i ? "M0 0h7v1H6v2H5v1H4v1H3V4H2V3H1V1H0z" : "M3 0h1v1h1v1h1v2h1v1H0V4h1V2h1V1h1z"} />
                    </svg>
                  </div>
                ))}
              </div>
              <div className="mt-[6px] ml-[6px] flex gap-[18px]"><RunDown /><RunDiamond /><RunAll /><Break /><Stop /></div>
              <Sep />
              <Btn><Profile /></Btn>
              <Btn><Profile cut /></Btn>
              <div className="mt-[6px]"><Wrench /></div>
            </div>
          </Bar>
          <Bar className="w-[483px]">
            <div className="flex items-start gap-[18px] pt-[14px]">
              <StepInto /><StepOver /><StepOut /><Sep /><IntoCur /><OverCur /><OutCur />
            </div>
          </Bar>
          <Bar className="w-[465px]">
            <div className="flex items-start gap-[18px] pt-[14px]">
              <FlagAdd /><Caret className="mt-6" /><FlagDel /><Caret className="mt-6" /><FlagEdit /><FlagSave /><Caret className="mt-6" /><FlagGo />
            </div>
          </Bar>
        </div>
        <div className="flex h-24">
          <Bar grip={false} className="w-[523px]">
            <div className="flex items-start gap-[18px] pt-[15px] pl-[28px]">
              <Btn pressed />
              <Btn><WinRings /></Btn>
              <Btn><WinCross /></Btn>
              <Btn><WinBars /></Btn>
              <Btn><WinDots /></Btn>
              <Sep />
              <div className="mt-[6px]"><Traffic /></div>
            </div>
          </Bar>
          <Bar className="w-[582px]">
            <div className="flex items-start gap-[18px] pt-[15px]">
              <AddCursor /><DelCursor /><EdgePrev /><EdgeNext /><FallPrev /><FallNext /><RisePrev /><RiseNext />
            </div>
          </Bar>
          <Bar className="w-[1083px]">
            <div className="flex items-start gap-[18px] pt-[15px]">
              <Back /><Caret className="mt-6" /><Forward /><Caret className="mt-6" /><AddMark /><Sep />
              <div className="mt-[1px] w-[117px] pl-[8px] leading-[42px] tracking-[-0.3px] text-[#20204a]">Search:</div>
              <div className="-mt-[3px] h-[54px] w-[345px] border-t-[3px] border-l-[3px] border-[#959595] bg-white" />
              <div className="-mt-[3px] -ml-[12px] flex h-[51px] w-[54px] items-center justify-center border-[3px] border-t-white border-r-[#656365] border-b-[#656365] border-l-white pt-[12px]">
                <svg viewBox="0 0 13 7" className="h-[21px] w-[39px]" shapeRendering="crispEdges">
                  <path fill="#fff" d="M0 0h13v1h-1v1h-1v1h-1v1H9v1H8v1H7v1H6V6H5V5H4V4H3V3H2V2H1V1H0z" />
                </svg>
              </div>
              <div className="-ml-[6px]"><FindPrev /></div>
              <div className="-ml-[12px]"><FindNext /></div>
              <div className="ml-[3px]"><FindOpts /></div>
            </div>
          </Bar>
          <Bar className="w-[450px]">
            <div className="flex items-start gap-[18px] pt-[15px]">
              <Lens /><Lens minus /><LensFull /><CursorZoom /><CursorPair /><ZoomBox />
            </div>
          </Bar>
          <Bar className="w-[585px]">
            <div className="flex items-start gap-[18px] pt-[15px]">
              <Btn pressed><LineMode /></Btn>
              <Btn><PulseMode /></Btn>
              <Btn><DenseMode /></Btn>
              <Sep />
              <div className="mt-[6px] flex gap-[18px]"><Pat1 /><Pat2 /><Pat3 /><Pat4 /></div>
            </div>
          </Bar>
        </div>
      </div>
      <div className="mt-[4px] h-[2px] shrink-0 bg-[#efefef]" />
      <div className="h-[3px] shrink-0 bg-[#9a9f98]" />
      <div className="flex h-[769px] shrink-0">
        <div className="flex h-full w-[463px] flex-col border-r-[3px] border-[#9a9f98]">
          <div className="flex h-[57px] shrink-0 items-center border-b-[3px] border-[#9a9f98] bg-[#808080]">
            <HeaderIcon />
            <svg viewBox="0 0 5 3" className="ml-3 h-[9px] w-[15px]" shapeRendering="crispEdges">
              <path fill="#fff" d="M0 0h5v1H4v1H3v1H2V2H1V1H0z" />
            </svg>
          </div>
          <div className="h-[3px] shrink-0 bg-[#f0f0f0]" />
          <div className="mt-[3px] ml-[10px] flex-1 bg-[#808080] pt-[9px]">
            {SIGNALS.map((s) => (
              <div key={s.name} className={`flex items-start ${s.selected ? "h-12 bg-white text-[#14142e]" : "h-[51px] text-white"}`}>
                <Diamond />
                <span className={`ml-[14px] leading-[42px] ${s.track}`}>{s.name}</span>
              </div>
            ))}
            <div className="mr-[12px] ml-[16px] h-[3px] bg-white" />
            <div className="-mt-[3px] ml-[6px] h-[12px] w-[9px] border-t-[6px] border-l-[3px] border-white" />
          </div>
        </div>
        <div className="ml-[6px] flex h-full w-[123px] flex-col border-r-[3px] border-[#9a9f98]">
          <div className="h-[57px] shrink-0 border-b-[3px] border-[#9a9f98] bg-[#808080] pr-[13px] text-right leading-[54px] tracking-[-0.3px] text-white">
            Msgs
          </div>
          <div className="h-[3px] shrink-0 bg-[#f0f0f0]" />
          <div className="mt-[3px] flex-1 bg-[#808080] pt-[9px]">
            {SIGNALS.map((s) => (
              <div
                key={s.name}
                className={`pl-[7px] leading-[42px] tracking-[-1.3px] ${s.selected ? "h-12 bg-white text-[#14142e]" : "h-[51px] text-white"}`}
              >
                {s.value}
              </div>
            ))}
            <div className="mr-[12px] ml-[6px] h-[3px] bg-white" />
          </div>
        </div>
        <div className="ml-[6px] flex h-full w-[3147px] flex-col border-r-[3px] border-[#9a9f98]">
          <div className="h-[54px] shrink-0 bg-white" />
          <div className="h-[3px] shrink-0 bg-[#9a9f98]" />
          <div className="h-[3px] shrink-0 bg-[#f0f0f0]" />
          <div className="mt-[3px]"><Waves /></div>
        </div>
        <div className="h-full flex-1 bg-[#f4f4f4]" />
      </div>
    </div>
  );
}
